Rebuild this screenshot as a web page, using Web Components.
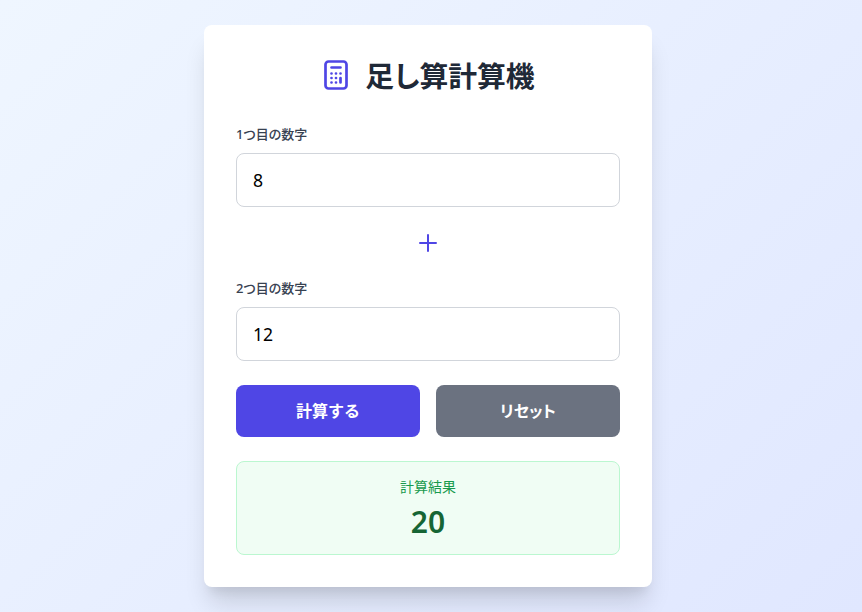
<!DOCTYPE html>
<html lang="ja">
<head>
<meta charset="utf-8">
<title>足し算計算機</title>
<style>
html, body { margin: 0; height: 100%; }
body {
    box-sizing: border-box;
    min-height: 100vh;
    padding-right: 6px;
    background: linear-gradient(135deg, #eff6ff 0%, #e0e7ff 100%);
    font-family: "Noto Sans", "Noto Sans CJK JP", sans-serif;
    font-feature-settings: "palt";
    display: flex;
    align-items: center;
    justify-content: center;
}
</style>
</head>
<body>
<calc-card>
    <calc-title slot="title">足し算計算機</calc-title>
    <number-field label="1つ目の数字" value="8"></number-field>
    <plus-sign></plus-sign>
    <number-field label="2つ目の数字" value="12"></number-field>
    <calc-actions>
        <action-button color="#4f46e5" style="font-feature-settings: normal">計算する</action-button>
        <action-button color="#6b7280">リセット</action-button>
    </calc-actions>
    <result-box label="計算結果" value="20"></result-box>
</calc-card>

<script>
class CalcCard extends HTMLElement {
    constructor(){
        super();
        this.attachShadow({mode:'open'});
        this.shadowRoot.innerHTML = `
        <style>
        :host{
            display: flex;
            flex-direction: column;
            box-sizing: border-box;
            width: 448px;
            padding: 32px;
            background: #fff;
            border-radius: 8px;
            box-shadow: 0 20px 25px -5px rgba(0,0,0,.14), 0 10px 10px -5px rgba(0,0,0,.06);
        }
        </style>
        <slot name="title"></slot>
        <slot></slot>
        `;
    }
}

class CalcTitle extends HTMLElement {
    constructor(){
        super();
        this.attachShadow({mode:'open'});
        this.shadowRoot.innerHTML = `
        <style>
        :host{
            display: flex;
            align-items: center;
            justify-content: center;
            gap: 11px;
            height: 36px;
            padding-right: 3px;
            margin-bottom: 32px;
            font-size: 28.8px;
            font-weight: 700;
            color: #1f2937;
        }
        span{ line-height: 37px; height: 36px; }
        svg{ width: 36px; height: 36px; flex: none; }
        </style>
        <svg viewBox="0 0 24 24" fill="none" stroke="#4f46e5" stroke-width="1.8" stroke-linecap="round" stroke-linejoin="round">
            <path d="M9 7h6m0 10v-3m-3 3h.01M9 17h.01M9 14h.01M12 14h.01M15 11h.01M12 11h.01M9 11h.01M7 21h10a2 2 0 002-2V5a2 2 0 00-2-2H7a2 2 0 00-2 2v14a2 2 0 002 2z"/>
        </svg>
        <span><slot></slot></span>
        `;
    }
}

class NumberField extends HTMLElement {
    constructor(){
        super();
        this.attachShadow({mode:'open'});
        this.shadowRoot.innerHTML = `
        <style>
        :host{ display: block; }
        label{
            display: block;
            height: 20px;
            line-height: 18px;
            margin-bottom: 8px;
            font-size: 13px;
            font-weight: 500;
            color: #374151;
        }
        input{
            display: block;
            box-sizing: border-box;
            width: 100%;
            height: 54px;
            padding: 0 16px;
            border: 1px solid #d1d5db;
            border-radius: 8px;
            background: #fff;
            color: #000;
            font-family: inherit;
            font-size: 17.6px;
            outline: none;
        }
        </style>
        <label>${this.getAttribute('label')}</label>
        <input type="number" value="${this.getAttribute('value')}">
        `;
    }
}

class PlusSign extends HTMLElement {
    constructor(){
        super();
        this.attachShadow({mode:'open'});
        this.shadowRoot.innerHTML = `
        <style>
        :host{
            display: flex;
            justify-content: center;
            align-items: center;
            height: 24px;
            margin: 24px 0 24px;
        }
        svg{ width: 24px; height: 24px; }
        </style>
        <svg viewBox="0 0 24 24" fill="none" stroke="#4f46e5" stroke-width="2" stroke-linecap="round" stroke-linejoin="round">
            <path d="M12 4v16m8-8H4"/>
        </svg>
        `;
    }
}

class CalcActions extends HTMLElement {
    constructor(){
        super();
        this.attachShadow({mode:'open'});
        this.shadowRoot.innerHTML = `
        <style>
        :host{
            display: grid;
            grid-template-columns: 1fr 1fr;
            gap: 16px;
            margin: 24px 0;
        }
        </style>
        <slot></slot>
        `;
    }
}

class ActionButton extends HTMLElement {
    constructor(){
        super();
        this.attachShadow({mode:'open'});
        this.shadowRoot.innerHTML = `
        <style>
        :host{
            display: flex;
            align-items: center;
            justify-content: center;
            box-sizing: border-box;
            height: 52px;
            padding-bottom: 2px;
            border-radius: 8px;
            background: ${this.getAttribute('color')};
            color: #fff;
            font-size: 16px;
            font-weight: 600;
            cursor: pointer;
        }
        </style>
        <slot></slot>
        `;
    }
}

class ResultBox extends HTMLElement {
    constructor(){
        super();
        this.attachShadow({mode:'open'});
        this.shadowRoot.innerHTML = `
        <style>
        :host{
            display: flex;
            flex-direction: column;
            align-items: center;
            box-sizing: border-box;
            height: 94px;
            padding-top: 16px;
            background: #f0fdf4;
            border: 1px solid #bbf7d0;
            border-radius: 8px;
        }
        .label{
            height: 20px;
            line-height: 18px;
            font-size: 14px;
            color: #189a4e;
        }
        .value{
            height: 40px;
            line-height: 40px;
            margin-top: 4px;
            font-size: 30px;
            font-weight: 600;
            color: #166534;
        }
        </style>
        <div class="label">${this.getAttribute('label')}</div>
        <div class="value">${this.getAttribute('value')}</div>
        `;
    }
}

customElements.define('calc-card', CalcCard);
customElements.define('calc-title', CalcTitle);
customElements.define('number-field', NumberField);
customElements.define('plus-sign', PlusSign);
customElements.define('calc-actions', CalcActions);
customElements.define('action-button', ActionButton);
customElements.define('result-box', ResultBox);
</script>
</body>
</html>
